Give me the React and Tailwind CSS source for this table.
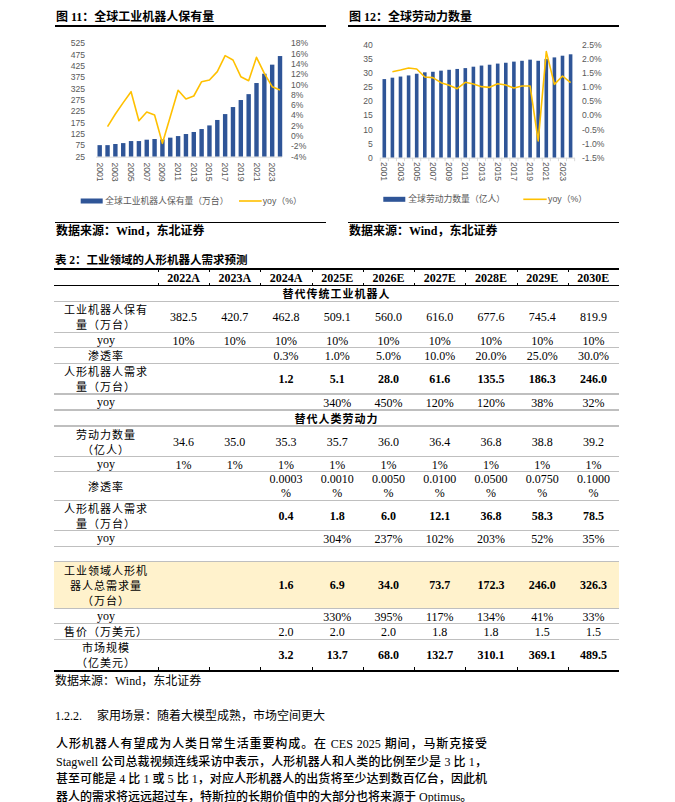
import React from "react";

const BLUE = "#2f5597";
const GOLD = "#ffc000";
const GREY = "#595959";
const SANS = "'Liberation Sans','Noto Sans CJK SC',sans-serif";

// chart 1: 全球工业机器人保有量 (万台) + yoy
const robots = [76, 76, 81, 85, 94, 94, 100, 103, 101, 109, 116, 125, 134, 147, 163, 187, 213, 244, 275, 301, 350, 391, 431, 469];
const robotsYoy = [290, 252, 218, 185, 272, 246, 255, 340, 260, 181, 207, 198, 155, 150, 125, 77, 90, 140, 152, 82, 130, 170, 180];

// chart 2: 全球劳动力数量 (亿人) + yoy
const labor = [27.9, 28.4, 28.8, 29.2, 29.8, 30.3, 30.5, 30.9, 31.2, 31.5, 31.8, 32.3, 32.7, 33.0, 33.4, 33.7, 34.1, 34.4, 34.8, 34.4, 35.0, 35.6, 36.2, 36.7];
const laborYoy = [125, 120, 114, 117, 141, 143, 158, 166, 176, 157, 162, 170, 172, 161, 165, 174, 168, 168, 333, 65, 163, 138, 158];

const chart1 = {
  bars: robots,
  vmin: 25,
  scale: 0.2267,
  base: 129.7,
  x0: 44.7,
  step: 7.84,
  barW: 4.4,
  axis: [41, 227],
  ticks: false,
  line: robotsYoy,
  left: ["525", "475", "425", "375", "325", "275", "225", "175", "125", "75", "25"],
  leftX: 30,
  leftTop: 16.3,
  leftGap: 11.33,
  right: ["18%", "16%", "14%", "12%", "10%", "8%", "6%", "4%", "2%", "0%", "-2%", "-4%"],
  rightX: 236,
  rightTop: 16.3,
  rightGap: 10.3,
  yearY: 135.5,
  legend: { y: 174, sx: 25.7, tx: 50.3, text: "全球工业机器人保有量（万台）", lx: [184, 206.7], ytx: 207.7 },
};

const chart2 = {
  bars: labor,
  vmin: 0,
  scale: 2.8175,
  base: 130.7,
  x0: 36.3,
  step: 8.1,
  barW: 3.6,
  axis: [32.2, 226.6],
  ticks: true,
  line: laborYoy,
  left: ["40", "35", "30", "25", "20", "15", "10", "5", "0"],
  leftX: 24.7,
  leftTop: 18,
  leftGap: 14.09,
  right: ["2.5%", "2.0%", "1.5%", "1.0%", "0.5%", "0.0%", "-0.5%", "-1.0%", "-1.5%"],
  rightX: 234,
  rightTop: 18,
  rightGap: 14.09,
  yearY: 135,
  legend: { y: 172.3, sx: 35.3, tx: 60.3, text: "全球劳动力数量（亿人）", lx: [175.3, 198.7], ytx: 200 },
};

function Chart({ c }) {
  const years = [];
  for (let i = 0; i < 24; i += 2) years.push(i);
  return (
    <svg width="271" height="195" className="block">
      {c.bars.map((v, i) => {
        const h = (v - c.vmin) * c.scale;
        return <rect key={i} x={c.x0 + i * c.step - c.barW / 2} y={c.base - h} width={c.barW} height={h} fill={BLUE} />;
      })}
      <line x1={c.axis[0]} x2={c.axis[1]} y1={c.base + 0.5} y2={c.base + 0.5} stroke="#d9d9d9" strokeWidth="1" />
      {c.ticks &&
        Array.from({ length: 25 }).map((_, j) => {
          const x = c.x0 - c.step / 2 + j * c.step;
          return <line key={j} x1={x} x2={x} y1={c.base} y2={c.base + 3.5} stroke="#d9d9d9" strokeWidth="1" />;
        })}
      <polyline
        points={c.line.map((z, i) => `${c.x0 + (i + 1) * c.step},${3 + z / 3}`).join(" ")}
        fill="none"
        stroke={GOLD}
        strokeWidth="1.6"
        strokeLinejoin="round"
      />
      <g fontFamily={SANS} fontSize="8.6" fill={GREY}>
        {c.left.map((t, k) => (
          <text key={t} x={c.leftX} y={c.leftTop + k * c.leftGap} textAnchor="end" dominantBaseline="central">
            {t}
          </text>
        ))}
        {c.right.map((t, k) => (
          <text key={t} x={c.rightX} y={c.rightTop + k * c.rightGap} dominantBaseline="central">
            {t}
          </text>
        ))}
        {years.map((i) => {
          const x = c.x0 + i * c.step;
          return (
            <text key={i} x={x} y={c.yearY} transform={`rotate(90 ${x} ${c.yearY})`} dominantBaseline="central">
              {2001 + i}
            </text>
          );
        })}
        <rect x={c.legend.sx} y={c.legend.y - 2.5} width="22" height="5" fill={BLUE} />
        <text x={c.legend.tx} y={c.legend.y} dominantBaseline="central" fontSize="8.8">
          {c.legend.text}
        </text>
        <line x1={c.legend.lx[0]} x2={c.legend.lx[1]} y1={c.legend.y} y2={c.legend.y} stroke={GOLD} strokeWidth="1.6" />
        <text x={c.legend.ytx} y={c.legend.y} dominantBaseline="central" fontSize="8.8">
          yoy（%）
        </text>
      </g>
    </svg>
  );
}

function ChartBlock({ title, c }) {
  return (
    <div className="w-[271px]">
      <div className="h-[18px] leading-[16px] border-b-2 border-black pl-[1px] text-[12px] font-bold font-['Liberation_Serif','Noto_Sans_CJK_SC',serif]">
        {title}
      </div>
      <Chart c={c} />
      <div className="h-[17px] leading-[16px] border-t border-black pl-[1px] text-[12px] font-bold font-['Liberation_Serif','Noto_Sans_CJK_SC',serif]">
        数据来源：Wind，东北证券
      </div>
    </div>
  );
}

const E = "";
const rows = [
  { kind: "section", text: "替代传统工业机器人", cls: "h-[16px] border-b border-[#bfbfbf]" },
  { label: ["工业机器人保有", "量（万台）"], vals: ["382.5", "420.7", "462.8", "509.1", "560.0", "616.0", "677.6", "745.4", "819.9"], cls: "h-[31px] border-b border-[#bfbfbf]" },
  { label: ["yoy"], vals: ["10%", "10%", "10%", "10%", "10%", "10%", "10%", "10%", "10%"], cls: "h-[15px] border-b border-[#bfbfbf]" },
  { label: ["渗透率"], vals: [E, E, "0.3%", "1.0%", "5.0%", "10.0%", "20.0%", "25.0%", "30.0%"], cls: "h-[16px] border-b border-[#bfbfbf]" },
  { label: ["人形机器人需求", "量（万台）"], vals: [E, E, "1.2", "5.1", "28.0", "61.6", "135.5", "186.3", "246.0"], bold: true, cls: "h-[31px] border-b-2 border-[#bfbfbf]" },
  { label: ["yoy"], vals: [E, E, E, "340%", "450%", "120%", "120%", "38%", "32%"], cls: "h-[16px] border-b-2 border-[#bfbfbf]" },
  { kind: "section", text: "替代人类劳动力", cls: "h-[16px] border-b-2 border-[#bfbfbf]" },
  { label: ["劳动力数量", "（亿人）"], vals: ["34.6", "35.0", "35.3", "35.7", "36.0", "36.4", "36.8", "38.8", "39.2"], cls: "h-[30px] border-b border-[#bfbfbf]" },
  { label: ["yoy"], vals: ["1%", "1%", "1%", "1%", "1%", "1%", "1%", "1%", "1%"], cls: "h-[15px] border-b border-[#bfbfbf]" },
  { label: ["渗透率"], vals: [E, E, "0.0003|%", "0.0010|%", "0.0050|%", "0.0100|%", "0.0500|%", "0.0750|%", "0.1000|%"], cls: "h-[29px] border-b border-[#bfbfbf]" },
  { label: ["人形机器人需求", "量（万台）"], vals: [E, E, "0.4", "1.8", "6.0", "12.1", "36.8", "58.3", "78.5"], bold: true, cls: "h-[30px] border-b border-[#bfbfbf]" },
  { label: ["yoy"], vals: [E, E, E, "304%", "237%", "102%", "203%", "52%", "35%"], cls: "h-[16px] border-b border-[#bfbfbf]" },
  { kind: "empty", cls: "h-[15px] border-b border-[#bfbfbf]" },
  { label: ["工业领域人形机", "器人总需求量", "（万台）"], vals: [E, E, "1.6", "6.9", "34.0", "73.7", "172.3", "246.0", "326.3"], bold: true, cls: "h-[47px] border-b border-[#bfbfbf] bg-[#fff2cc]" },
  { label: ["yoy"], vals: [E, E, E, "330%", "395%", "117%", "134%", "41%", "33%"], cls: "h-[15px] border-b border-[#bfbfbf]" },
  { label: ["售价（万美元）"], vals: [E, E, "2.0", "2.0", "2.0", "1.8", "1.8", "1.5", "1.5"], cls: "h-[16px] border-b border-[#bfbfbf]" },
  { label: ["市场规模", "（亿美元）"], vals: [E, E, "3.2", "13.7", "68.0", "132.7", "310.1", "369.1", "489.5"], bold: true, last: true, cls: "h-[32px] border-b-2 border-black" },
];

const years = ["2022A", "2023A", "2024A", "2025E", "2026E", "2027E", "2028E", "2029E", "2030E"];
const GRID = "grid grid-cols-[104px_repeat(9,minmax(0,1fr))]";

function TableRow({ r }) {
  if (r.kind === "section") {
    return (
      <div className={`${r.cls} flex items-center justify-center text-[11px] font-bold tracking-[1px] font-['Noto_Sans_CJK_SC',sans-serif]`}>
        {r.text}
      </div>
    );
  }
  if (r.kind === "empty") return <div className={r.cls} />;
  return (
    <div className={`${GRID} ${r.cls}`}>
      <div className="flex flex-col items-center justify-center leading-[15px]">
        {r.label.map((l) =>
          l === "yoy" ? (
            <span key={l} className="text-[12px] font-['Liberation_Serif',serif]">yoy</span>
          ) : (
            <span key={l} className="text-[11px] tracking-[1px] font-['Noto_Sans_CJK_SC',sans-serif]">{l}</span>
          )
        )}
      </div>
      {r.vals.map((v, i) => (
        <div
          key={i}
          className={`flex flex-col items-center justify-center text-[12px] leading-[14px] font-['Liberation_Serif',serif] ${r.bold ? "font-bold" : ""} ${
            r.last ? "bg-[linear-gradient(#000,#000)] bg-no-repeat bg-[length:1px_3px] bg-[position:0_100%]" : ""
          }`}
        >
          {v.split("|").map((p, j) => (
            <span key={j}>{p}</span>
          ))}
        </div>
      ))}
    </div>
  );
}

export default function App() {
  return (
    <div className="w-[675px] h-[802px] overflow-hidden bg-white text-black pt-[9px]">
      <div className="flex gap-[22px] pl-[55px]">
        <ChartBlock title="图 11：全球工业机器人保有量" c={chart1} />
        <ChartBlock title="图 12：全球劳动力数量" c={chart2} />
      </div>

      <div className="mt-[14px] ml-[55px] h-[15px] leading-[15px] text-[11.5px] font-bold font-['Liberation_Serif','Noto_Sans_CJK_SC',serif]">
        表 2：工业领域的人形机器人需求预测
      </div>

      <div className="ml-[54px] w-[565px] border-t-2 border-black">
        <div className={`${GRID} h-[16px] border-b border-black`}>
          <div />
          {years.map((y) => (
            <div
              key={y}
              className="flex items-center justify-center text-[12px] leading-[14px] font-bold font-['Liberation_Serif',serif] bg-[linear-gradient(#000,#000),linear-gradient(#000,#000)] bg-no-repeat bg-[length:1px_2px] bg-[position:0_0,0_100%]"
            >
              {y}
            </div>
          ))}
        </div>
        {rows.map((r, i) => (
          <TableRow key={i} r={r} />
        ))}
      </div>

      <div className="ml-[55px] h-[18px] leading-[18px] text-[12px] font-['Liberation_Serif','Noto_Sans_CJK_SC',serif]">
        数据来源：Wind，东北证券
      </div>

      <div className="mt-[18px] ml-[55px] h-[16px] leading-[16px] text-[12px] flex font-['Liberation_Serif','Noto_Sans_CJK_SC',serif]">
        <span className="w-[42px]">1.2.2.</span>
        <span>家用场景：随着大模型成熟，市场空间更大</span>
      </div>

      <div className="mt-[12px] ml-[56px] w-[431px] text-[12px] font-medium font-['Liberation_Serif','Noto_Sans_CJK_SC',serif]">
        <div className="h-[17.5px] leading-[17.5px] whitespace-nowrap [text-align-last:justify]">
          人形机器人有望成为人类日常生活重要构成。在 CES 2025 期间，马斯克接受
        </div>
        <div className="h-[17.5px] leading-[17.5px] whitespace-nowrap [text-align-last:justify]">
          Stagwell 公司总裁视频连线采访中表示，人形机器人和人类的比例至少是 3 比 1，
        </div>
        <div className="h-[17.5px] leading-[17.5px] whitespace-nowrap [text-align-last:justify]">
          甚至可能是 4 比 1 或 5 比 1，对应人形机器人的出货将至少达到数百亿台，因此机
        </div>
        <div className="h-[17.5px] leading-[17.5px] whitespace-nowrap">
          器人的需求将远远超过车，特斯拉的长期价值中的大部分也将来源于 Optimus。
        </div>
      </div>
    </div>
  );
}
